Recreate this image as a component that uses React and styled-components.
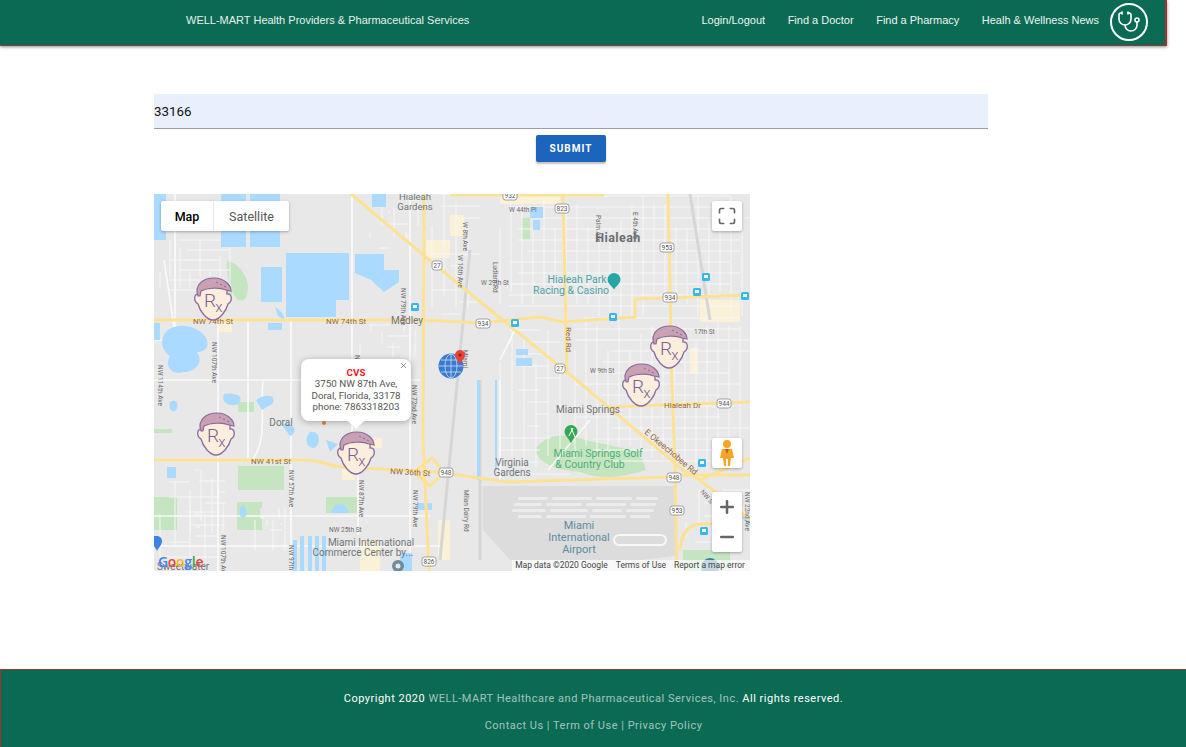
import React from 'react';
import styled, { createGlobalStyle } from 'styled-components';
import { Stethoscope, X, Plus, Minus, Maximize } from 'lucide-react';

const GlobalStyle = createGlobalStyle`
  html, body { margin: 0; padding: 0; background: #fff; }
  body { font-family: "Liberation Sans", Arial, sans-serif; overflow: hidden; }
`;

const navLinks = ['Login/Logout', 'Find a Doctor', 'Find a Pharmacy', 'Healh & Wellness News'];

// map geometry, in page coordinates (viewBox starts at the map corner)
const water = [
  'M286 253H349V300H336V317H286Z',
  'M261 267H282V302H261Z',
  'M355 254H384L384 270H399V282L384 292L371 280L355 273Z',
  'M221 194H246V247H221Z',
  'M250 194H280V247H250Z',
  'M154 194H166V240H154Z',
  'M372 194H386V207H372Z',
  'M168 330C180 322 196 326 204 335C212 345 206 352 197 352C204 362 196 372 184 372C172 376 164 366 170 356C160 350 160 336 168 330Z',
  'M154 323H160V340H154Z',
  'M268 323H282V330H268Z',
  'M275 307C280 310 285 315 284 320L278 316Z',
  'M530 207H543V218H530Z',
  'M533 220H540V230H533Z',
  'M516 349H528V355H516Z',
  'M516 358H532V366H516Z',
  'M170 402C176 398 180 404 176 410C172 414 168 408 170 402Z',
  'M224 394C234 392 246 396 238 404C230 408 220 402 224 394Z',
  'M256 400C266 392 278 396 272 404L262 410Z',
  'M282 425C292 420 300 432 290 436Z',
  'M310 432C320 430 322 444 314 448C306 448 304 438 310 432Z',
  'M326 440L338 444L330 452Z',
  'M167 467H176V478H167Z',
  'M243 505C248 510 248 516 243 518C238 516 238 508 243 505Z',
  'M335 505C345 502 350 510 348 513H330Z',
  'M418 503H432V510H418Z',
  'M293 540H297V571H293ZM300 536H304V571H300ZM308 536H312V571H308ZM315 536H319V571H315ZM322 536H326V571H322Z',
  'M400 553H412V571H400Z',
  'M735 505L750 520V526L730 506Z',
  'M477 380H480V480H477Z',
  'M495 380H497V470H495Z',
];

const parks = [
  'M227 261C236 262 246 272 248 286C248 298 244 302 238 300C232 294 226 278 227 261Z',
  'M154 497H177V530H154Z',
  'M237 502H262V530H237Z',
  'M326 497H357V513H326Z',
  'M238 466H284V490H238Z',
  'M535 450C545 434 565 432 585 440L640 452L646 470C620 478 600 480 580 472C560 470 540 466 535 450Z',
  'M683 550H730V571H683Z',
  'M522 218H530V240H522Z',
  'M223 286H232V294H223Z',
  'M154 429H172V433H154Z',
  'M238 402H254V412H238Z',
];

const beige = [
  'M426 240H450V258H426Z',
  'M700 300H740V322H700Z',
  'M690 348H698V374H690Z',
  'M366 438H382V448H366Z',
  'M342 466H355V480H342Z',
  'M218 320H232V332H218Z',
  'M360 540H380V571H360Z',
  'M438 520H450V560H438Z',
  'M450 215H464V236H450Z',
  'M500 194H560V204H500Z',
  'M722 505H745V520H722Z',
];

const majorRoads = [
  'M154 320H424L480 323L540 317L563 322L635 317V299L750 295',
  'M424 194L423 440L429 571',
  'M351 194L421 253L500 318L573 377L683 470L700 480L750 520',
  'M563 194L567 375',
  'M668 194L672 380L675 470L677 571',
  'M154 460H304C320 460 330 466 341 467L437 472L507 482L667 477L683 475L750 475',
  'M607 407L750 402',
  'M450 195H604',
  'M700 480L750 458',
  'M680 550C682 530 690 525 700 524L722 524',
  'M414 472L432 458L444 472L430 486Z',
];

const greys = ['M480 380V560', 'M470 250L440 560', 'M690 194L710 320'];

const miniRoads = [
  'M175 194V330', 'M218 322V571', 'M154 516H430', 'M248 320V460', 'M291 320V560', 'M352 194V460',
  'M358 470V535', 'M410 194V571', 'M154 546H440', 'M164 260L176 340H154', 'M154 380H420',
  'M263 380C260 410 268 440 252 460', 'M590 420L548 470', 'M500 380V480', 'M520 320L500 360',
];

const scatter = (x0, y0, x1, y1, step) => {
  // street blocks: lines broken up so that it doesn't look like graph paper
  let d = '';
  let n = 7;
  for (let x = x0; x < x1; x += step) {
    n = (n * 31 + 11) % 97;
    const a = y0 + (n % 5) * 8;
    d += `M${x} ${a}V${y1 - (n % 3) * 12}`;
  }
  for (let y = y0; y < y1; y += step) {
    n = (n * 17 + 23) % 89;
    const a = x0 + (n % 5) * 9;
    d += `M${a} ${y}H${x1 - (n % 4) * 10}`;
  }
  return d;
};

const streetBlocks = [
  scatter(500, 196, 750, 316, 11),
  scatter(575, 318, 750, 470, 11),
  scatter(500, 330, 570, 480, 12),
  scatter(160, 240, 240, 300, 10),
  scatter(370, 200, 420, 250, 12),
  scatter(360, 325, 420, 355, 11),
  scatter(190, 470, 225, 545, 11),
  scatter(160, 482, 220, 570, 15),
  scatter(255, 518, 290, 532, 6),
  scatter(432, 194, 480, 320, 12),
  scatter(686, 490, 750, 550, 13),
];

const shields = [
  { x: 437, y: 265, t: '27' }, { x: 562, y: 208, t: '823' }, { x: 667, y: 247, t: '953' },
  { x: 670, y: 297, t: '934' }, { x: 483, y: 323, t: '934' }, { x: 560, y: 368, t: '27' },
  { x: 724, y: 403, t: '944' }, { x: 446, y: 472, t: '948' }, { x: 674, y: 477, t: '948' },
  { x: 677, y: 510, t: '953' }, { x: 429, y: 561, t: '826' }, { x: 510, y: 195, t: '932' },
];

const transit = [
  [415, 307], [706, 277], [697, 292], [745, 296], [613, 317], [515, 323], [702, 463], [704, 531],
];

const labels = [
  { x: 415, y: 200, t: 'Hialeah', s: 9.5 }, { x: 415, y: 210, t: 'Gardens', s: 9.5 },
  { x: 407, y: 324, t: 'Medley', s: 10 },
  { x: 281, y: 426, t: 'Doral', s: 10 },
  { x: 588, y: 413, t: 'Miami Springs', s: 10 },
  { x: 512, y: 466, t: 'Virginia', s: 10 }, { x: 512, y: 476, t: 'Gardens', s: 10 },
  { x: 371, y: 546, t: 'Miami International', s: 10 },
  { x: 363, y: 556, t: 'Commerce Center by...', s: 10 },
  { x: 183, y: 570, t: 'Sweetwater', s: 10 },
];

const roadNames = [
  { x: 193, y: 324, t: 'NW 74th St' }, { x: 326, y: 324, t: 'NW 74th St' },
  { x: 251, y: 464, t: 'NW 41st St' }, { x: 390, y: 474, t: 'NW 36th St', r: 3 },
  { x: 664, y: 408, t: 'Hialeah Dr' }, { x: 644, y: 433, t: 'E Okeechobee Rd', r: 40, s: 8.5 },
  { x: 566, y: 327, t: 'Red Rd', r: 90, s: 8 },
];

const streetNames = [
  { x: 212, y: 342, t: 'NW 107th Ave', r: 90 }, { x: 158, y: 365, t: 'NW 114th Ave', r: 90 },
  { x: 355, y: 355, t: 'NW 87th Ave', r: 90 }, { x: 401, y: 288, t: 'NW 79th Ave', r: 90 },
  { x: 412, y: 385, t: 'NW 72nd Ave', r: 90 }, { x: 289, y: 470, t: 'NW 57th Ave', r: 90 },
  { x: 359, y: 480, t: 'NW 87th Ave', r: 90 }, { x: 413, y: 490, t: 'NW 79th Ave', r: 90 },
  { x: 289, y: 545, t: 'NW 97th Ave', r: 90 }, { x: 221, y: 535, t: 'NW 107th Ave', r: 90 },
  { x: 329, y: 532, t: 'NW 25th St' }, { x: 463, y: 222, t: 'W 8th Ave', r: 90 },
  { x: 509, y: 212, t: 'W 44th Pl' }, { x: 458, y: 255, t: 'W 16th Ave', r: 90 },
  { x: 493, y: 262, t: 'Ludlam Rd', r: 90 }, { x: 481, y: 285, t: 'W 29th St' },
  { x: 596, y: 215, t: 'Palm Ave', r: 90 }, { x: 633, y: 212, t: 'E 4th Ave', r: 90 },
  { x: 694, y: 334, t: '17th St' }, { x: 630, y: 372, t: 'E 4th Ave', r: 90 },
  { x: 590, y: 373, t: 'W 9th St' }, { x: 463, y: 350, t: 'Miami', r: 90 },
  { x: 464, y: 490, t: 'Milan Dairy Rd', r: 90 }, { x: 700, y: 492, t: 'NW S River Dr', r: 50 },
  { x: 745, y: 492, t: 'NW 22nd Ave', r: 90 },
];

const placeNames = [
  { x: 577, y: 283, t: 'Hialeah Park', c: '#4ea4a8', s: 10.5 },
  { x: 571, y: 294, t: 'Racing & Casino', c: '#4ea4a8', s: 10.5 },
  { x: 598, y: 457, t: 'Miami Springs Golf', c: '#4caf78', s: 10.5 },
  { x: 590, y: 468, t: '& Country Club', c: '#4caf78', s: 10.5 },
  { x: 579, y: 529, t: 'Miami', c: '#5d8d9f', s: 11 },
  { x: 579, y: 541, t: 'International', c: '#5d8d9f', s: 11 },
  { x: 579, y: 553, t: 'Airport', c: '#5d8d9f', s: 11 },
];

const pills = [
  [518, 497, 30], [552, 497, 40], [596, 497, 36], [636, 497, 22],
  [514, 503, 28], [546, 503, 36], [586, 503, 40], [630, 503, 26],
  [512, 509, 34], [550, 509, 38], [592, 509, 30], [626, 509, 28],
  [518, 515, 24], [546, 515, 40], [590, 515, 36], [630, 515, 20],
];

const rxMarkers = [[213, 299], [669, 347], [641, 385], [216, 434], [356, 453]];

const RxMarker = ({ x, y }) => (
  <g transform={`translate(${x} ${y})`}>
    <path
      d="M-14 -5C-19 -6 -20 2 -15 5C-13 13 -6 21 0 21C6 21 13 13 15 5C20 2 19 -6 14 -5L14 -12L-14 -12Z"
      fill="#fbeedd"
      stroke="#8a6b9e"
      strokeWidth="1.3"
    />
    <path
      d="M-15 -3C-19 -14 -10 -21 1 -21C11 -21 18 -14 18 -8L13 -9C6 -12 -6 -11 -12 -8L-13 -3Z"
      fill="#c9a1b2"
      stroke="#8a6b9e"
      strokeWidth="1.2"
    />
    <path d="M3 -17L5 -16M7 -15L9 -14M11 -13L13 -12" stroke="#8a6b9e" strokeWidth="1" />
    <text x="-3" y="8" textAnchor="middle" fontFamily="Roboto, sans-serif" fontWeight="300" fontSize="19" fill="#7c5f96">R</text>
    <text x="6" y="13" textAnchor="middle" fontFamily="Roboto, sans-serif" fontWeight="300" fontSize="15" fill="#7c5f96">x</text>
  </g>
);

const MapArt = () => (
  <MapSvg viewBox="154 194 596 377">
    <rect x="154" y="194" width="596" height="377" fill="#e8e8e8" />
    <path d="M483 486H676V556L640 560H510L483 530Z" fill="#dcdcdc" />
    {beige.map((d) => <path key={d} d={d} fill="#fbf1d6" />)}
    {parks.map((d) => <path key={d} d={d} fill="#c4e5c0" />)}
    {streetBlocks.map((d, i) => <path key={i} d={d} stroke="#f6f6f6" strokeWidth="1" fill="none" />)}
    {greys.map((d) => <path key={d} d={d} stroke="#d6d6d6" strokeWidth="3" fill="none" />)}
    {miniRoads.map((d) => <path key={d} d={d} stroke="#fafafa" strokeWidth="1.6" fill="none" />)}
    {water.map((d) => <path key={d} d={d} fill="#aadaff" />)}
    {pills.map(([x, y, w]) => <rect key={`${x}-${y}`} x={x} y={y} width={w} height="3" rx="1.5" fill="#ececec" />)}
    <path d="M620 535H660C668 535 668 545 660 545H620C612 545 612 535 620 535Z" stroke="#f8f8f8" strokeWidth="2" fill="none" />
    {majorRoads.map((d) => <path key={d} d={d} stroke="#fde293" strokeWidth="3" fill="none" />)}
    <circle cx="710" cy="567" r="9" fill="#3b7ea6" />
    {streetNames.map(({ x, y, t, r }) => (
      <text key={t + x} x={x} y={y} fontSize="6.5" fill="#6d6d6d" fontFamily="Roboto, sans-serif" transform={r ? `rotate(${r} ${x} ${y})` : undefined}>{t}</text>
    ))}
    {roadNames.map(({ x, y, t, r, s }) => (
      <text key={t + x} x={x} y={y} fontSize={s || 8} fill="#96693c" fontFamily="Roboto, sans-serif" stroke="#fff" strokeWidth="0" transform={r ? `rotate(${r} ${x} ${y})` : undefined}>{t}</text>
    ))}
    {labels.map(({ x, y, t, s }) => (
      <text key={t + y} x={x} y={y} fontSize={s} textAnchor="middle" fill="#70757a" fontFamily="Roboto, sans-serif">{t}</text>
    ))}
    <text x="618" y="242" fontSize="12.5" fontWeight="700" textAnchor="middle" letterSpacing=".4" fill="#696e73" fontFamily="Roboto, sans-serif">Hialeah</text>
    {placeNames.map(({ x, y, t, c, s }) => (
      <text key={t} x={x} y={y} fontSize={s} textAnchor="middle" fill={c} fontFamily="Roboto, sans-serif">{t}</text>
    ))}
    {transit.map(([x, y]) => (
      <g key={`${x}-${y}`}>
        <rect x={x - 4} y={y - 4} width="8" height="8" rx="1.5" fill="#35b7f0" />
        <rect x={x - 2} y={y - 2} width="4" height="3" fill="#fff" />
      </g>
    ))}
    {shields.map(({ x, y, t }) => (
      <g key={t + x}>
        <rect x={x - (t.length > 2 ? 7 : 5)} y={y - 4} width={t.length > 2 ? 14 : 10} height="9" rx="2.5" fill="#fff" stroke="#8a8a8a" strokeWidth=".8" />
        <text x={x} y={y + 3} fontSize="6.5" textAnchor="middle" fill="#555" fontFamily="Roboto, sans-serif">{t}</text>
      </g>
    ))}
    {/* poi pins */}
    <path d="M615 274a6.5 6.5 0 0 1 6.5 6.5c0 4 -4 6 -6.5 10c-2.500 -4 -6.500 -6 -6.500 -10a6.500 6.500 0 0 1 6.500 -6.500z" transform="translate(-1 -1)" fill="#26a6a6" />
    <path d="M571 425a6.500 6.500 0 0 1 6.500 6.500c0 4 -4 6 -6.500 12c-2.500 -6 -6.500 -8 -6.500 -12a6.500 6.500 0 0 1 6.500 -6.500z" fill="#34a853" />
    <path d="M571 428L575 437M573 428L569 436" stroke="#fff" strokeWidth="1" />
    <path d="M157 536a5 5 0 0 1 5 5c0 4 -3 6 -5 10c-1 -3 -3 -4 -3 -5V536z" fill="#3d84e0" />
    <circle cx="398" cy="566" r="6" fill="#6f8a9c" />
    <circle cx="398" cy="566" r="2.500" fill="#e8e8e8" />
    <circle cx="324" cy="423" r="2" fill="#e8833a" />
    {rxMarkers.map(([x, y]) => <RxMarker key={x} x={x} y={y} />)}
    {/* my location globe */}
    <g transform="translate(451 366)" stroke="#dfeaf8" strokeWidth=".7" fill="none">
      <circle r="12.500" fill="#3a7bd0" stroke="none" />
      <path d="M-12 0H12M-10 -6H10M-10 6H10M0 -12V12" />
      <ellipse rx="6" ry="12" />
    </g>
    <path d="M460 350a5 5 0 0 1 5 5c0 3 -3.500 5 -5 10c-1.500 -5 -5 -7 -5 -10a5 5 0 0 1 5 -5z" fill="#ea4335" />
    <circle cx="460" cy="355" r="1.600" fill="#a51d12" />
  </MapSvg>
);

const App = () => (
  <Page>
    <GlobalStyle />
    <Header>
      <Brand>WELL-MART Health Providers &amp; Pharmaceutical Services</Brand>
      <Nav>
        {navLinks.map((link) => <NavLink key={link}>{link}</NavLink>)}
      </Nav>
      <LogoCircle><Stethoscope size={24} strokeWidth={1.6} /></LogoCircle>
    </Header>

    <Main>
      <SearchForm>
        <ZipInput readOnly value="33166" />
        <SubmitButton type="button">Submit</SubmitButton>
      </SearchForm>

      <MapFrame>
        <MapArt />
        <MapType>
          <MapTypeButton $active>Map</MapTypeButton>
          <MapTypeButton>Satellite</MapTypeButton>
        </MapType>
        <FullscreenButton><Maximize size={20} strokeWidth={2} /></FullscreenButton>
        <Pegman>
          <svg width="20" height="28" viewBox="0 0 20 28">
            <circle cx="10" cy="5" r="4" fill="#f5a623" />
            <path d="M5 10H15L17 19H14L13 27H11V20H9V27H7L6 19H3Z" fill="#f5a623" />
            <path d="M8 10L10 15L12 10Z" fill="#d9541e" />
          </svg>
        </Pegman>
        <ZoomBox>
          <ZoomButton><Plus size={20} strokeWidth={3} /></ZoomButton>
          <ZoomButton><Minus size={20} strokeWidth={3} /></ZoomButton>
        </ZoomBox>
        <GoogleMark>
          <span style={{ color: '#4285f4' }}>G</span>
          <span style={{ color: '#ea4335' }}>o</span>
          <span style={{ color: '#fbbc05' }}>o</span>
          <span style={{ color: '#4285f4' }}>g</span>
          <span style={{ color: '#34a853' }}>l</span>
          <span style={{ color: '#ea4335' }}>e</span>
        </GoogleMark>
        <Attribution>
          <span>Map data ©2020 Google</span>
          <span>Terms of Use</span>
          <span>Report a map error</span>
        </Attribution>
        <Popup>
          <CloseIcon><X size={9} strokeWidth={1.6} /></CloseIcon>
          <PopupTitle>CVS</PopupTitle>
          <div>3750 NW 87th Ave,</div>
          <div>Doral, Florida, 33178</div>
          <div>phone: 7863318203</div>
        </Popup>
      </MapFrame>
    </Main>

    <Footer>
      <FooterLine>
        Copyright 2020 <FooterLink>WELL-MART Healthcare and Pharmaceutical Services, Inc.</FooterLink> All rights reserved.
      </FooterLine>
      <FooterLine>
        <FooterLink>Contact Us | Term of Use | Privacy Policy</FooterLink>
      </FooterLine>
    </Footer>
  </Page>
);

export default App;

const Page = styled.div`
  display: flex;
  flex-direction: column;
  height: 747px;
  overflow: hidden;
`;

const Header = styled.header`
  display: flex;
  align-items: center;
  box-sizing: border-box;
  width: 1167px;
  height: 46px;
  padding: 0 17px 6px 186px;
  background: #0b6a53;
  border-bottom: 1px solid #8f3b36;
  border-right: 2px solid #a5312f;
  box-shadow: 0 1px 3px rgba(0, 0, 0, 0.45);
`;

const Brand = styled.div`
  color: #e6f1ed;
  font-size: 11px;
  line-height: 16px;
`;

const Nav = styled.nav`
  display: flex;
  gap: 22.500px;
  margin-left: auto;
`;

const NavLink = styled.a`
  color: #eef5f2;
  font-size: 11px;
  line-height: 16px;
`;

const LogoCircle = styled.div`
  display: flex;
  align-items: center;
  justify-content: center;
  box-sizing: border-box;
  width: 38px;
  height: 38px;
  margin-left: 11px;
  margin-top: 4px;
  border: 2px solid #fff;
  border-radius: 50%;
  color: #fff;
`;

const Main = styled.main`
  flex: 1;
  padding: 48px 0 0 154px;
`;

const SearchForm = styled.form`
  display: flex;
  flex-direction: column;
  align-items: center;
  width: 834px;
`;

const ZipInput = styled.input`
  box-sizing: border-box;
  width: 100%;
  height: 35px;
  padding: 0;
  border: 0;
  border-bottom: 1px solid #9e9e9e;
  outline: none;
  background: #e8f0fe;
  color: #111;
  font-family: Roboto, sans-serif;
  font-size: 13.300px;
`;

const SubmitButton = styled.button`
  width: 70px;
  height: 27px;
  margin-top: 6px;
  padding: 0;
  border: 0;
  border-radius: 2px;
  background: #1c64bc;
  box-shadow: 0 2px 2px rgba(0, 0, 0, 0.25);
  color: #fff;
  font-family: Roboto, sans-serif;
  font-size: 10px;
  font-weight: 700;
  letter-spacing: 1px;
  text-transform: uppercase;
`;

const MapFrame = styled.div`
  position: relative;
  width: 596px;
  height: 377px;
  margin-top: 32px;
  overflow: hidden;
  font-family: Roboto, sans-serif;
`;

const MapSvg = styled.svg`
  display: block;
  width: 596px;
  height: 377px;
`;

const MapType = styled.div`
  position: absolute;
  top: 7px;
  left: 7px;
  display: flex;
  height: 30px;
  border-radius: 2px;
  background: #fff;
  box-shadow: 0 1px 3px rgba(0, 0, 0, 0.3);
`;

const MapTypeButton = styled.div`
  display: flex;
  align-items: center;
  justify-content: center;
  width: ${(p) => (p.$active ? '52px' : '75px')};
  border-right: ${(p) => (p.$active ? '1px solid #e6e6e6' : '0')};
  color: ${(p) => (p.$active ? '#000' : '#565656')};
  font-size: 12.500px;
  font-weight: ${(p) => (p.$active ? 500 : 400)};
`;

const ControlBox = styled.div`
  position: absolute;
  display: flex;
  align-items: center;
  justify-content: center;
  width: 30px;
  height: 30px;
  border-radius: 2px;
  background: #fff;
  box-shadow: 0 1px 3px rgba(0, 0, 0, 0.3);
  color: #666;
`;

const FullscreenButton = styled(ControlBox)`
  top: 7px;
  right: 8px;
`;

const Pegman = styled(ControlBox)`
  top: 244px;
  right: 8px;
`;

const ZoomBox = styled(ControlBox)`
  top: 298px;
  right: 8px;
  flex-direction: column;
  height: 60px;
`;

const ZoomButton = styled.div`
  display: flex;
  align-items: center;
  justify-content: center;
  height: 30px;
`;

const GoogleMark = styled.div`
  position: absolute;
  left: 4px;
  bottom: 1px;
  font-family: "Open Sans", sans-serif;
  font-size: 14px;
  font-weight: 600;
  letter-spacing: -0.3px;
  line-height: 16px;
`;

const Attribution = styled.div`
  position: absolute;
  right: 0;
  bottom: 0;
  display: flex;
  gap: 8px;
  height: 11px;
  padding: 0 5px 0 3px;
  background: rgba(255, 255, 255, 0.7);
  color: #444;
  font-size: 8.500px;
  line-height: 11px;
`;

const Popup = styled.div`
  position: absolute;
  top: 165px;
  left: 147px;
  box-sizing: border-box;
  width: 110px;
  height: 62px;
  padding: 8px 0 0;
  border-radius: 8px;
  background: #fff;
  box-shadow: 0 1px 6px rgba(0, 0, 0, 0.3);
  color: #555;
  font-size: 9.800px;
  line-height: 11.300px;
  text-align: center;

  &::after {
    content: '';
    position: absolute;
    left: 47px;
    bottom: -8px;
    border-top: 8px solid #fff;
    border-left: 8px solid transparent;
    border-right: 8px solid transparent;
  }
`;

const PopupTitle = styled.div`
  color: #f01428;
  font-weight: 700;
`;

const CloseIcon = styled.span`
  position: absolute;
  top: 2px;
  right: 3px;
  color: #555;
`;

const Footer = styled.footer`
  box-sizing: border-box;
  height: 78px;
  padding-top: 21px;
  background: #0b6a53;
  border-top: 1px solid #8f3b36;
  border-left: 1px solid #a5312f;
  color: #fff;
  font-family: Roboto, sans-serif;
  font-size: 11px;
  letter-spacing: 0.5px;
  text-align: center;
`;

const FooterLine = styled.div`
  height: 27px;
  line-height: 16px;
`;

const FooterLink = styled.a`
  color: rgba(255, 255, 255, 0.62);
`;
